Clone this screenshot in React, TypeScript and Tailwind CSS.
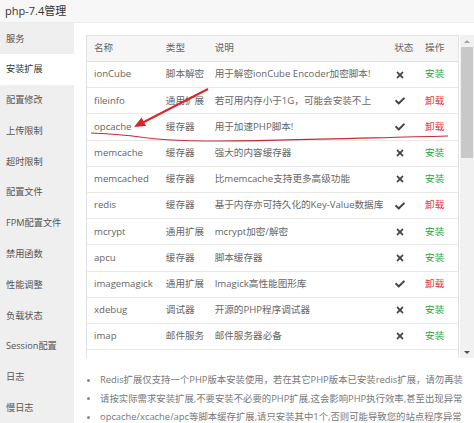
import React from "react";
import { FaCheck, FaTimes } from "react-icons/fa";

const side = [
  "服务",
  "安装扩展",
  "配置修改",
  "上传限制",
  "超时限制",
  "配置文件",
  "FPM配置文件",
  "禁用函数",
  "性能调整",
  "负载状态",
  "Session配置",
  "日志",
  "慢日志",
];

type Row = [string, string, string, boolean];
const rows: Row[] = [
  ["ionCube", "脚本解密", "用于解密ionCube Encoder加密脚本!", false],
  ["fileinfo", "通用扩展", "若可用内存小于1G，可能会安装不上", true],
  ["opcache", "缓存器", "用于加速PHP脚本!", true],
  ["memcache", "缓存器", "强大的内容缓存器", false],
  ["memcached", "缓存器", "比memcache支持更多高级功能", false],
  ["redis", "缓存器", "基于内存亦可持久化的Key-Value数据库", true],
  ["mcrypt", "通用扩展", "mcrypt加密/解密", false],
  ["apcu", "缓存器", "脚本缓存器", false],
  ["imagemagick", "通用扩展", "Imagick高性能图形库", true],
  ["xdebug", "调试器", "开源的PHP程序调试器", false],
  ["imap", "邮件服务", "邮件服务器必备", false],
  ["", "", "", false],
];

const notes = [
  "Redis扩展仅支持一个PHP版本安装使用，若在其它PHP版本已安装redis扩展，请勿再装",
  "请按实际需求安装扩展,不要安装不必要的PHP扩展,这会影响PHP执行效率,甚至出现异常",
  "opcache/xcache/apc等脚本缓存扩展,请只安装其中1个,否则可能导致您的站点程序异常",
];

export default function App() {
  return (
    <div
      className="relative w-[474px] h-[423px] overflow-hidden bg-white text-[#666]"
      style={{ fontFamily: '"Open Sans","Noto Sans CJK SC",sans-serif' }}
    >
      <div className="h-[23px] bg-[#f7f7f7] border-b border-[#ececec] pl-[5px] flex items-center text-[11px] text-[#333]">
        php-7.4管理
      </div>
      <div className="flex">
        <div className="w-[74px] shrink-0 bg-[#efefef] flex flex-col">
          {side.map((s, i) => (
            <div
              key={s}
              className={`h-[30.8px] flex items-center pl-[6px] text-[9.2px] whitespace-nowrap ${
                i === 1 ? "bg-white text-[#333]" : "text-[#555]"
              }`}
            >
              {s}
            </div>
          ))}
        </div>
        <div className="flex-1 flex flex-col pl-[12px] pt-[12px]">
          <div className="flex h-[323px]">
            <div className="w-[373px] border border-[#e2e2e2] border-b-0 overflow-hidden text-[9.6px]">
              <div className="flex h-[26px] items-center bg-[#f6f6f6] border-b border-[#e2e2e2]">
                <div className="w-[72px] pl-[7px]">名称</div>
                <div className="w-[49px] pl-[7px]">类型</div>
                <div className="w-[180px] pl-[7px]">说明</div>
                <div className="w-[31px] pl-[7px]">状态</div>
                <div className="w-[40px] pl-[7px]">操作</div>
              </div>
              {rows.map((r, i) => (
                <div
                  key={i}
                  className="flex h-[26.2px] items-center border-b border-[#e8e8e8] whitespace-nowrap"
                >
                  <div className="w-[72px] pl-[7px]">{r[0]}</div>
                  <div className="w-[49px] pl-[7px]">{r[1]}</div>
                  <div className="w-[180px] pl-[7px] overflow-hidden">{r[2]}</div>
                  <div className="w-[31px] pl-[8px] text-[#444]">
                    {r[0] === "" ? null : r[3] ? (
                      <FaCheck className="w-[10px] h-[10px]" />
                    ) : (
                      <FaTimes className="w-[10px] h-[10px]" />
                    )}
                  </div>
                  <div
                    className={`w-[40px] pl-[7px] ${
                      r[3] ? "text-[#e0333a]" : "text-[#20a53a]"
                    }`}
                  >
                    {r[0] === "" ? "" : r[3] ? "卸载" : "安装"}
                  </div>
                </div>
              ))}
            </div>
            <div className="w-[14px] ml-[1px] bg-[#f1f1f1] flex flex-col items-center">
              <div className="h-[12px] flex items-center justify-center">
                <div className="w-0 h-0 border-l-[3px] border-r-[3px] border-b-[3px] border-l-transparent border-r-transparent border-b-[#a3a3a3]" />
              </div>
              <div className="w-[12px] h-[111px] bg-[#c8c8c8]" />
              <div className="flex-1" />
              <div className="h-[12px] flex items-center justify-center">
                <div className="w-0 h-0 border-l-[3px] border-r-[3px] border-t-[3px] border-l-transparent border-r-transparent border-t-[#505050]" />
              </div>
            </div>
          </div>
          <ul className="mt-[13px] flex flex-col text-[9.4px] text-[#777]">
            {notes.map((n) => (
              <li key={n} className="h-[18.5px] flex items-center whitespace-nowrap">
                <span className="w-[3px] h-[3px] rounded-full bg-[#888] ml-[1px] mr-[10px] shrink-0" />
                {n}
              </li>
            ))}
          </ul>
        </div>
      </div>
      <svg
        className="absolute inset-0 pointer-events-none"
        width="474"
        height="423"
        viewBox="0 0 474 423"
      >
        <line x1="208" y1="89" x2="142" y2="123" stroke="#d8262a" strokeWidth="2" />
        <polygon points="134,127 146,126 141.5,117.5" fill="#d8262a" />
        <path
          d="M 91 133 C 110 134, 125 135, 140 137 S 170 141, 220 141 S 330 139, 448 136"
          fill="none"
          stroke="#c42a36"
          strokeWidth="1.2"
        />
      </svg>
    </div>
  );
}
